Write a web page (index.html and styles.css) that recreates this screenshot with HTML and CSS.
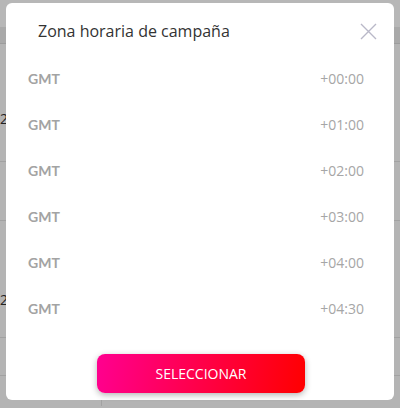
FILE: index.html
```html
<!DOCTYPE html>
<html lang="es">
<head>
    <meta charset="UTF-8">
    <meta name="viewport" content="width=device-width, initial-scale=1.0">
    <title>Zona horaria de campaña</title>
    <link rel="stylesheet" href="styles.css">
</head>
<body>
    <div class="page">
        <div class="row top"></div>
        <div class="row head"></div>
        <div class="row tall"><span class="cut">2</span></div>
        <div class="row mid"></div>
        <div class="row tall2"><span class="cut">2</span></div>
        <div class="row short"></div>
        <div class="row last"><div class="col"></div></div>
    </div>
    <div class="modal">
        <div class="modal-head">
            <h2>Zona horaria de campaña</h2>
            <button class="close" aria-label="Cerrar">
                <svg width="17" height="17" viewBox="0 0 17 17">
                    <path d="M1 1L16 16M16 1L1 16" stroke="#b9b8c8" stroke-width="1.4" fill="none"/>
                </svg>
            </button>
        </div>
        <ul class="zones">
            <li><span class="name">GMT</span><span class="offset">+00:00</span></li>
            <li><span class="name">GMT</span><span class="offset">+01:00</span></li>
            <li><span class="name">GMT</span><span class="offset">+02:00</span></li>
            <li><span class="name">GMT</span><span class="offset">+03:00</span></li>
            <li><span class="name">GMT</span><span class="offset">+04:00</span></li>
            <li><span class="name">GMT</span><span class="offset">+04:30</span></li>
        </ul>
        <div class="modal-foot">
            <button class="select">SELECCIONAR</button>
        </div>
    </div>
</body>
</html>
```

FILE: styles.css
```css
html,
body,
ul,
h2 {
    margin: 0;
    padding: 0;
}
ul {
    list-style: none;
}
body {
    width: 400px;
    height: 408px;
    overflow: hidden;
    position: relative;
    background-color: #b4b4b4;
    font-family: "Open Sans", "Liberation Sans", sans-serif;
}
.page {
    display: flex;
    flex-direction: column;
}
.row {
    border-bottom: 1px solid #a2a2a2;
}
.top {
    height: 27px;
    background-color: #b7b7b7;
    border-bottom: none;
}
.head {
    height: 16px;
    background-color: #a9a9a9;
    border-bottom-color: #9c9c9c;
}
.tall {
    height: 118px;
    box-sizing: border-box;
    padding-top: 66px;
}
.mid {
    height: 58px;
}
.tall2 {
    height: 117px;
    box-sizing: border-box;
    padding-top: 70px;
}
.short {
    height: 37px;
}
.last {
    height: 30px;
    border-bottom: none;
    display: flex;
}
.col {
    width: 101px;
    border-right: 1px solid #a2a2a2;
}
.cut {
    display: block;
    font-size: 14px;
    line-height: 18px;
    color: #222;
}
.modal {
    position: absolute;
    left: 6px;
    top: 3px;
    width: 388px;
    height: 397px;
    background-color: #fff;
    border-radius: 6px;
    display: flex;
    flex-direction: column;
}
.modal-head {
    display: flex;
    align-items: center;
    justify-content: space-between;
    padding: 16px 17px 13px 32px;
}
.modal-head h2 {
    font-size: 16px;
    font-weight: 400;
    line-height: 24px;
    color: #333;
}
.close {
    border: none;
    background: none;
    padding: 0;
    width: 17px;
    height: 17px;
    cursor: pointer;
}
.close svg {
    display: block;
}
.zones li {
    height: 46px;
    line-height: 46px;
    display: flex;
    justify-content: space-between;
    padding: 0 30px 0 22px;
}
.name {
    font-family: Lato, "Open Sans", sans-serif;
    font-weight: 700;
    font-size: 14px;
    color: #a3a3a3;
}
.offset {
    font-size: 14px;
    color: #a6a6a6;
}
.modal-foot {
    display: flex;
    justify-content: center;
    padding-top: 22px;
}
.select {
    width: 208px;
    height: 39px;
    border: none;
    border-radius: 8px;
    background: linear-gradient(100deg, #ff0090 0%, #ff0000 100%);
    box-shadow: 0 2px 6px rgba(0, 0, 0, 0.3);
    color: #fff;
    font-family: "Open Sans", "Liberation Sans", sans-serif;
    font-size: 14px;
    cursor: pointer;
    margin-left: 2px;
}
```
